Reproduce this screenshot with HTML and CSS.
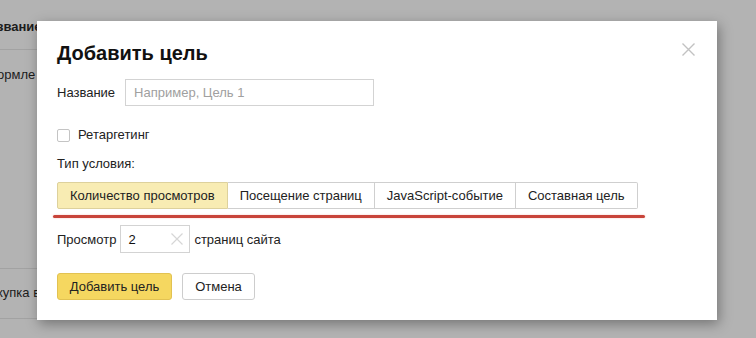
FILE: index.html
```html
<!DOCTYPE html>
<html lang="ru">
<head>
<meta charset="utf-8">
<link rel="stylesheet" href="styles.css">
</head>
<body>
<div class="page">
  <div class="bg-table">
    <div class="bg-row bg-row-head"><span class="bg-text bold">звание</span></div>
    <div class="bg-row bg-row-tall"><span class="bg-text">ормле</span></div>
    <div class="bg-row bg-row-last"><span class="bg-text">купка в</span></div>
  </div>

  <div class="modal">
    <svg class="close" width="13" height="13" viewBox="0 0 13 13"><path d="M0.5 0.5 L12.5 12.5 M12.5 0.5 L0.5 12.5" stroke="#c2c2c2" stroke-width="1.4" fill="none"/></svg>
    <h1 class="title">Добавить цель</h1>

    <div class="field-row">
      <span class="label">Название</span>
      <div class="input name-input"><span class="placeholder">Например, Цель 1</span></div>
    </div>

    <label class="check-row">
      <span class="checkbox"></span>
      <span class="label">Ретаргетинг</span>
    </label>

    <div class="type-label">Тип условия:</div>

    <div class="tabs">
      <div class="tab active">Количество просмотров</div>
      <div class="tab">Посещение страниц</div>
      <div class="tab">JavaScript-событие</div>
      <div class="tab">Составная цель</div>
    </div>
    <div class="underline"></div>

    <div class="views-row">
      <span class="label">Просмотр</span>
      <div class="input count-input">
        <span class="count">2</span>
        <svg class="clear" width="12" height="12" viewBox="0 0 12 12"><path d="M0.5 0.5 L11.5 11.5 M11.5 0.5 L0.5 11.5" stroke="#d6d6d6" stroke-width="1.2" fill="none"/></svg>
      </div>
      <span class="label">страниц сайта</span>
    </div>

    <div class="actions">
      <div class="btn btn-primary">Добавить цель</div>
      <div class="btn btn-default">Отмена</div>
    </div>
  </div>
</div>
</body>
</html>
```

FILE: styles.css
```css
* { box-sizing: border-box; }
html, body {
  margin: 0;
  padding: 0;
  width: 756px;
  height: 338px;
  overflow: hidden;
  background: #b3b3b3;
  font-family: "Liberation Sans", Arial, sans-serif;
  font-size: 13px;
  color: #222;
}
.page {
  position: relative;
  width: 756px;
  height: 338px;
}
.bg-table {
  width: 320px;
}
.bg-row {
  border-bottom: 1px solid #a2a2a2;
  line-height: 16px;
  white-space: nowrap;
  overflow: hidden;
}
.bg-row-head { height: 50px; padding-top: 19px; }
.bg-row-tall { height: 219px; padding-top: 17px; }
.bg-row-last { height: 50px; padding-top: 16px; }
.bg-text {
  display: inline-block;
  margin-left: -3px;
  color: #1c1c1c;
}
.bold { font-weight: bold; }

.modal {
  position: absolute;
  left: 37px;
  top: 21px;
  width: 680px;
  height: 299px;
  background: #fff;
  padding: 20px 20px 0 20px;
  box-shadow: 2px 4px 12px rgba(0, 0, 0, 0.35);
}
.close {
  position: absolute;
  right: 22px;
  top: 22px;
}
.title {
  margin: 0;
  font-size: 20px;
  line-height: 24px;
  font-weight: bold;
  color: #111;
}
.label { color: #222; }
.field-row {
  display: flex;
  align-items: center;
  gap: 10px;
  margin-top: 14px;
}
.input {
  border: 1px solid #d3d3d3;
  background: #fff;
  display: flex;
  align-items: center;
}
.name-input {
  width: 249px;
  height: 27px;
  padding-left: 8px;
}
.placeholder { color: #a0a0a0; }
.check-row {
  display: flex;
  align-items: center;
  gap: 8px;
  margin-top: 21px;
  line-height: 16px;
}
.checkbox {
  width: 13px;
  height: 13px;
  border: 1px solid #c4c4c4;
  border-radius: 2px;
  background: #fff;
}
.type-label {
  margin-top: 13px;
  line-height: 16px;
}
.tabs {
  display: flex;
  margin-top: 10px;
  height: 27px;
}
.tab {
  display: flex;
  align-items: center;
  padding: 0 12px;
  border: 1px solid #cfcfcf;
  border-left: none;
  color: #222;
  white-space: nowrap;
}
.tab:first-child { border-left: 1px solid #d9cf9c; }
.tab:last-child { border-radius: 0 2px 2px 0; }
.tab.active {
  background: #f8ecb3;
  border-color: #ddd19c;
  border-radius: 2px 0 0 2px;
}
.underline {
  position: absolute;
  left: 16px;
  top: 194px;
  width: 592px;
  height: 3px;
  border-radius: 2px;
  background: #c8443a;
  box-shadow: 0 0 2px rgba(220, 80, 70, 0.35);
}
.views-row {
  display: flex;
  align-items: center;
  gap: 4px;
  margin-top: 16px;
}
.count-input {
  width: 70px;
  height: 28px;
  padding: 0 6px 0 7px;
  justify-content: space-between;
}
.count { color: #111; }
.actions {
  display: flex;
  gap: 10px;
  margin-top: 20px;
}
.btn {
  height: 27px;
  display: flex;
  align-items: center;
  justify-content: center;
  border-radius: 3px;
  color: #222;
}
.btn-primary {
  width: 115px;
  background: #f5d760;
  border: 1px solid #e2c252;
}
.btn-default {
  width: 73px;
  background: #fff;
  border: 1px solid #cdcdcd;
}
```
